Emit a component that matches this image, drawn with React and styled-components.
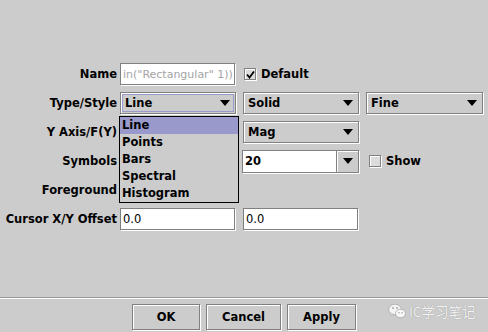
import React from 'react'
import styled, { createGlobalStyle } from 'styled-components'

const Global = createGlobalStyle`
  html, body { margin: 0; padding: 0; background: #cccccc; }
  body { font-family: "DejaVu Sans", "Noto Sans", sans-serif; }
`

const Dialog = styled.div`
  position: relative;
  width: 488px;
  height: 332px;
  background: #cccccc;
  display: flex;
  flex-direction: column;
  overflow: hidden;
`

const Form = styled.div`
  display: grid;
  grid-template-columns: 116px 123px 123px 117px;
  grid-auto-rows: 22px;
  row-gap: 7px;
  padding: 63px 0 0 4px;
`

const Label = styled.div`
  align-self: center;
  text-align: right;
  padding-right: 3px;
  font-size: 11.5px;
  font-weight: bold;
  color: #000;
  white-space: nowrap;
`

const Cell = styled.div`
  position: relative;
  display: flex;
  align-items: center;
`

const etched = `
  box-sizing: border-box;
  border: 1px solid #808080;
  box-shadow: inset 1px 1px 0 #ffffff, 1px 1px 0 #ffffff;
`

const TextField = styled.div`
  ${etched}
  width: ${p => p.$w}px;
  height: 22px;
  background: #ffffff;
  display: flex;
  align-items: center;
  overflow: hidden;
  padding: 0 2px;
  font-size: ${p => (p.$dim ? '11px' : '11.5px')};
  color: ${p => (p.$dim ? '#a4a4a4' : '#000')};
  white-space: nowrap;
`

const Combo = styled.div`
  ${etched}
  width: ${p => p.$w}px;
  height: 22px;
  display: flex;
  align-items: center;
  justify-content: space-between;
  padding: 0 5px 0 4px;
  font-size: 11.5px;
  font-weight: bold;
  color: #000;
  outline: ${p => (p.$focus ? '1px solid #9999cc' : 'none')};
  outline-offset: -3px;
`

const Arrow = styled.span`
  width: 0;
  height: 0;
  border-left: 5px solid transparent;
  border-right: 5px solid transparent;
  border-top: 6px solid #000;
`

const EditCombo = styled.div`
  ${etched}
  width: ${p => p.$w}px;
  height: 23px;
  display: flex;
  align-items: stretch;
  background: #ffffff;
  margin-left: -1px;
`

const EditText = styled.div`
  flex: 1;
  display: flex;
  align-items: center;
  padding-left: 2px;
  font-size: 11.5px;
  font-weight: bold;
`

const EditButton = styled.div`
  width: 21px;
  background: #cccccc;
  border-left: 1px solid #808080;
  box-shadow: inset 1px 1px 0 #ffffff;
  display: flex;
  align-items: center;
  justify-content: center;
`

const Check = styled.label`
  display: flex;
  align-items: center;
  gap: 5px;
  margin-left: ${p => p.$ml || 0}px;
  font-size: 11.5px;
  font-weight: bold;
`

const Box = styled.span`
  ${etched}
  width: 12px;
  height: 12px;
  display: flex;
  align-items: center;
  justify-content: center;
  background: #dcdcdc;
`

const Popup = styled.ul`
  position: absolute;
  top: 24px;
  left: -1px;
  width: 118px;
  margin: 0;
  padding: 0;
  list-style: none;
  border: 1px solid #000;
  background: #cccccc;
  z-index: 2;
`

const Item = styled.li`
  height: 17px;
  line-height: 17px;
  padding-left: 2px;
  font-size: 11.5px;
  font-weight: bold;
  background: ${p => (p.$sel ? '#9999cc' : 'transparent')};
`

const Spacer = styled.div`
  flex: 1;
`

const Separator = styled.div`
  height: 1px;
  background: #999999;
  border-bottom: 1px solid #ffffff;
`

const ButtonBar = styled.div`
  display: flex;
  justify-content: center;
  gap: 6px;
  padding: 5px 0 2px;
`

const Button = styled.button`
  ${etched}
  width: ${p => p.$w}px;
  height: 26px;
  background: #cccccc;
  font-family: "DejaVu Sans", sans-serif;
  font-size: 11.5px;
  font-weight: bold;
  color: #000;
  padding: 0;
`

const Watermark = styled.div`
  position: absolute;
  left: 388px;
  top: 301px;
  display: flex;
  align-items: center;
  gap: 3px;
  font-family: "Noto Sans CJK SC", sans-serif;
  font-size: 13.5px;
  color: #f2f2f2;
  text-shadow: 0 0 1px #8a8a8a;
`

function Tick() {
  return (
    <svg width="9" height="9" viewBox="0 0 9 9">
      <path d="M1 4.5 L3.5 7.5 L8 1.5" fill="none" stroke="#000" strokeWidth="1.8" />
    </svg>
  )
}

function WeChat() {
  return (
    <svg width="18" height="16" viewBox="0 0 18 16">
      <ellipse cx="7" cy="6.5" rx="6.3" ry="5.3" fill="#f4f4f4" stroke="#a8a8a8" strokeWidth="0.8" />
      <path d="M3 10.5 L2.5 13 L5.5 11.3 Z" fill="#f4f4f4" stroke="#a8a8a8" strokeWidth="0.6" />
      <circle cx="5" cy="5" r="0.9" fill="#a0a0a0" />
      <circle cx="9" cy="5" r="0.9" fill="#a0a0a0" />
      <ellipse cx="12.5" cy="10.5" rx="5" ry="4.2" fill="#f8f8f8" stroke="#a8a8a8" strokeWidth="0.8" />
      <circle cx="11" cy="9.8" r="0.75" fill="#a0a0a0" />
      <circle cx="14" cy="9.8" r="0.75" fill="#a0a0a0" />
    </svg>
  )
}

const types = ['Line', 'Points', 'Bars', 'Spectral', 'Histogram']

export default function App() {
  return (
    <>
      <Global />
      <Dialog>
        <Form>
          <Label>Name</Label>
          <Cell>
            <TextField $w={115} $dim>in("Rectangular" 1))</TextField>
          </Cell>
          <Cell>
            <Check $ml={1}>
              <Box><Tick /></Box>
              Default
            </Check>
          </Cell>
          <Cell />

          <Label>Type/Style</Label>
          <Cell>
            <Combo $w={116} $focus>Line<Arrow /></Combo>
            <Popup>
              {types.map((t, i) => (
                <Item key={t} $sel={i === 0}>{t}</Item>
              ))}
            </Popup>
          </Cell>
          <Cell>
            <Combo $w={116}>Solid<Arrow /></Combo>
          </Cell>
          <Cell>
            <Combo $w={117}>Fine<Arrow /></Combo>
          </Cell>

          <Label>Y Axis/F(Y)</Label>
          <Cell />
          <Cell>
            <Combo $w={116}>Mag<Arrow /></Combo>
          </Cell>
          <Cell />

          <Label>Symbols</Label>
          <Cell />
          <Cell>
            <EditCombo $w={117}>
              <EditText>20</EditText>
              <EditButton><Arrow /></EditButton>
            </EditCombo>
          </Cell>
          <Cell>
            <Check $ml={3}>
              <Box />
              Show
            </Check>
          </Cell>

          <Label>Foreground</Label>
          <Cell />
          <Cell />
          <Cell />

          <Label>Cursor X/Y Offset</Label>
          <Cell>
            <TextField $w={115}>0.0</TextField>
          </Cell>
          <Cell>
            <TextField $w={115}>0.0</TextField>
          </Cell>
          <Cell />
        </Form>
        <Spacer />
        <Separator />
        <ButtonBar>
          <Button $w={68}>OK</Button>
          <Button $w={75}>Cancel</Button>
          <Button $w={69}>Apply</Button>
        </ButtonBar>
        <Watermark>
          <WeChat />
          IC学习笔记
        </Watermark>
      </Dialog>
    </>
  )
}
